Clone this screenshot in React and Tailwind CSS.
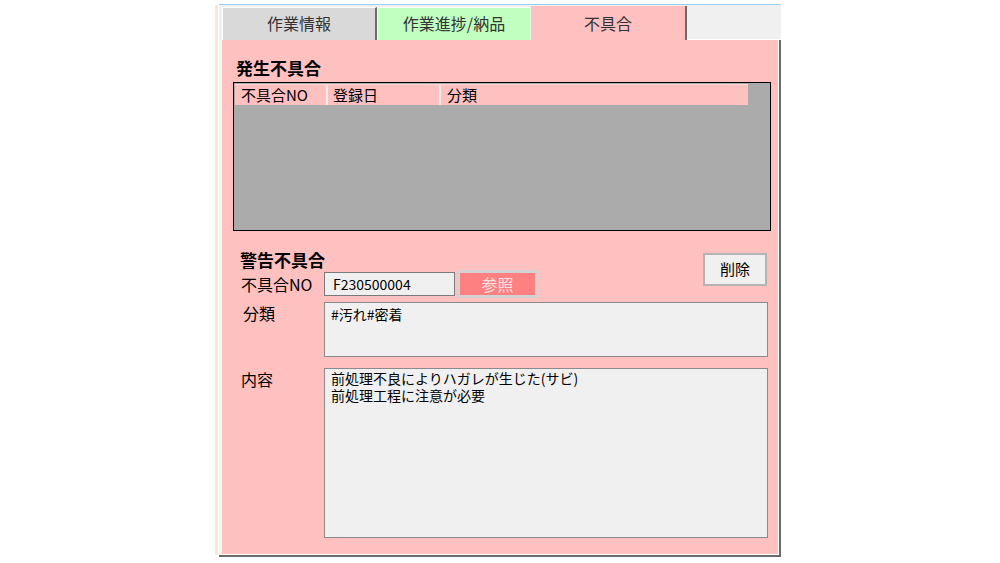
import React from 'react';

function Tab({ label, className }) {
  return (
    <div className={'flex justify-center text-[16px] leading-[22px] text-[#333] ' + className}>
      {label}
    </div>
  );
}

function App() {
  return (
    <div className="flex h-[563px] w-[1000px] bg-white font-['Noto_Sans_CJK_JP',sans-serif] text-black">
      <div className="ml-[215px] mt-[5px] h-[550px] w-[3px] bg-[#fbe6d8]" />
      <div className="ml-px flex w-[562px] flex-col">
        <div className="mt-1 h-px bg-[#93d2ee]" />

        {/* tabs */}
        <div className="flex h-[35px] items-end bg-[#f0f0f0] pl-[3px]">
          <Tab
            label="作業情報"
            className="h-[33px] w-[155px] border-l border-t border-white border-r-2 border-r-[#6b6b6b] bg-[#d9d9d9] pt-[4px]"
          />
          <Tab
            label="作業進捗/納品"
            className="h-[33px] w-[154px] border-l border-t border-white border-r border-r-[#eaf7ea] bg-[#c0ffc0] pt-[4px]"
          />
          <Tab
            label="不具合"
            className="h-[34px] w-[156px] border-r-2 border-r-[#6b6b6b] bg-[#ffc0c0] pt-[6px]"
          />
          <div className="h-[34px] flex-1 border-b border-white bg-[#f0f0f0]" />
        </div>

        {/* panel */}
        <div className="h-[517px] border-b-2 border-r-2 border-[#6b6b6b]">
          <div className="flex h-full flex-col border-b border-r border-white border-l-[3px] border-l-[#f6f6f6] bg-[#ffc0c0]">
            <div className="ml-[14px] mt-[18px] text-[17px] font-bold leading-[20px]">発生不具合</div>

            <div className="ml-[11px] mt-[4px] h-[149px] w-[538px] border border-black bg-[#ababab] p-px">
              <div className="flex h-[21px] w-[513px] border-t border-[#ffd8d8] bg-[#ffc0c0] text-[15px] leading-[20px]">
                <div className="w-[93px] border-r-2 border-r-[#ececec] pl-[6px]">不具合NO</div>
                <div className="w-[113px] border-r-2 border-r-[#ececec] pl-[5px]">登録日</div>
                <div className="flex-1 pl-[6px]">分類</div>
              </div>
            </div>

            <div className="mt-[19px] flex items-start">
              <div className="flex flex-col">
                <div className="ml-[18px] h-[20px] text-[17px] font-bold leading-[20px]">警告不具合</div>
                <div className="flex h-[28px] items-center">
                  <div className="ml-[19px] w-[83px] text-[16px] leading-[20px]">不具合NO</div>
                  <div className="h-[24px] w-[131px] border border-[#7a7a7a] bg-[#f0f0f0] pl-[8px] text-[14px] leading-[22px]">
                    F230500004
                  </div>
                  <div className="ml-[2px] h-[28px] w-[81px] border-[3px] border-[#d2d2d2] bg-[#ff8080] text-center text-[16px] leading-[22px] text-[#ffe4e4]">
                    参照
                  </div>
                </div>
              </div>
              <div className="ml-auto mr-[11px] mt-[3px] flex h-[33px] w-[64px] items-center justify-center border-2 border-[#b4b4b4] bg-[#f0f0f0] text-[15px]">
                削除
              </div>
            </div>

            <div className="mt-[4px] flex items-start">
              <div className="ml-[21px] w-[81px] pt-[1px] text-[16px] leading-[20px]">分類</div>
              <div className="h-[55px] w-[444px] border border-[#8a8a8a] bg-[#f0f0f0] pl-[6px] pt-[3px] text-[14px] leading-[16px]">
                #汚れ#密着
              </div>
            </div>

            <div className="mt-[11px] flex items-start">
              <div className="ml-[19px] w-[83px] pt-[1px] text-[16px] leading-[20px]">内容</div>
              <div className="h-[170px] w-[444px] border border-[#8a8a8a] bg-[#f0f0f0] pl-[6px] pt-[1px] text-[14px] leading-[17px]">
                <div>前処理不良によりハガレが生じた(サビ)</div>
                <div>前処理工程に注意が必要</div>
              </div>
            </div>
          </div>
        </div>
      </div>
    </div>
  );
}

export default App;
